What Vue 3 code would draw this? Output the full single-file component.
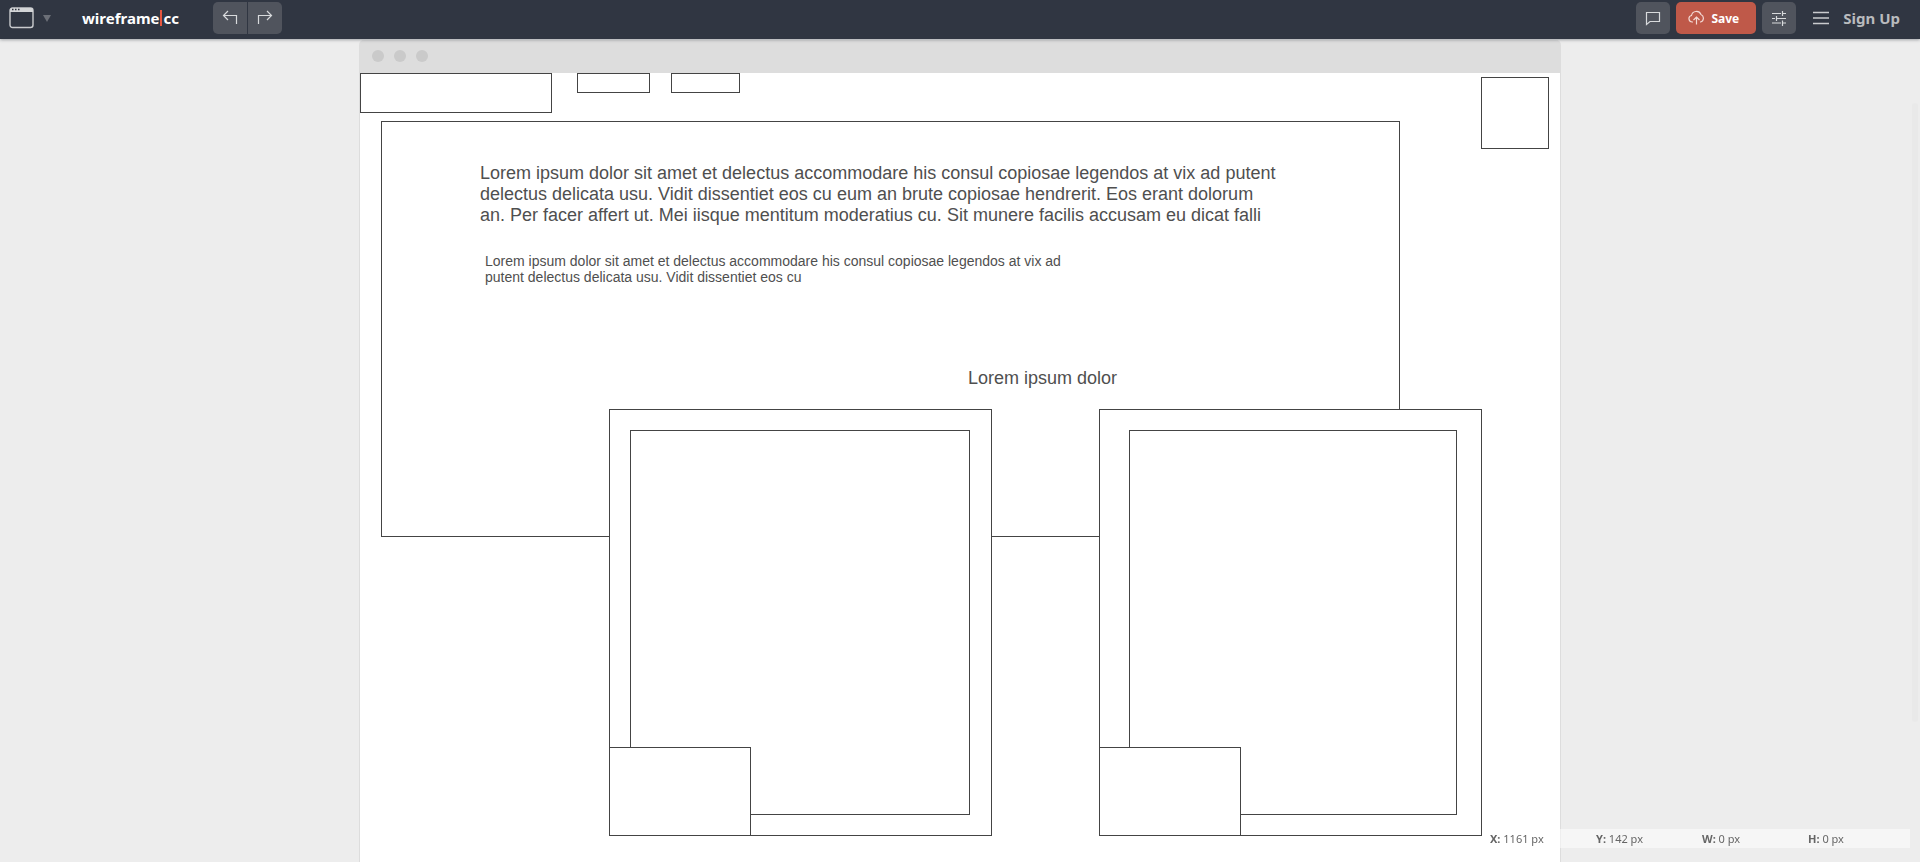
<script setup>
const shapes = [
  { id: 'logo', x: 0, y: 0, w: 192, h: 40 },
  { id: 'nav-1', x: 217, y: 0, w: 73, h: 20 },
  { id: 'nav-2', x: 311, y: 0, w: 69, h: 20 },
  { id: 'avatar', x: 1121, y: 4, w: 68, h: 72 },
  { id: 'hero', x: 21, y: 48, w: 1019, h: 416 },
  { id: 'card-1', x: 249, y: 336, w: 383, h: 427 },
  { id: 'card-1-image', x: 270, y: 357, w: 340, h: 385 },
  { id: 'card-1-label', x: 249, y: 674, w: 142, h: 89 },
  { id: 'card-2', x: 739, y: 336, w: 383, h: 427 },
  { id: 'card-2-image', x: 769, y: 357, w: 328, h: 385 },
  { id: 'card-2-label', x: 739, y: 674, w: 142, h: 89 },
]

const texts = [
  {
    id: 'headline',
    x: 120,
    y: 90,
    size: 'large',
    lines: [
      'Lorem ipsum dolor sit amet et delectus accommodare his consul copiosae legendos at vix ad putent',
      'delectus delicata usu. Vidit dissentiet eos cu eum an brute copiosae hendrerit. Eos erant dolorum',
      'an. Per facer affert ut. Mei iisque mentitum moderatius cu. Sit munere facilis accusam eu dicat falli',
    ],
  },
  {
    id: 'subhead',
    x: 125,
    y: 180,
    size: 'small',
    lines: [
      'Lorem ipsum dolor sit amet et delectus accommodare his consul copiosae legendos at vix ad',
      'putent delectus delicata usu. Vidit dissentiet eos cu',
    ],
  },
  { id: 'caption', x: 608, y: 295, size: 'large', lines: ['Lorem ipsum dolor'] },
]

const readout = [
  { label: 'X:', value: '1161 px' },
  { label: 'Y:', value: '142 px' },
  { label: 'W:', value: '0 px' },
  { label: 'H:', value: '0 px' },
]

const place = (s) => ({ left: s.x + 'px', top: s.y + 'px', width: s.w + 'px', height: s.h + 'px' })
</script>

<template>
  <div class="app">
    <header class="topbar">
      <div class="side">
        <button class="plain device" aria-label="Canvas type">
          <svg width="25" height="22" viewBox="0 0 25 22">
            <rect x="1" y="1" width="23" height="19.5" rx="2.5" fill="none" stroke="#c9cbce" stroke-width="1.4" />
            <path d="M1 5V3.5Q1 1 3.500 1h18Q24 1 24 3.500V5z" fill="#d3d5d7" />
            <path d="M3 2.500h1.500M6 2.500h1.500M9 2.500h1.500" stroke="#303540" stroke-width="1.500" />
          </svg>
          <svg width="8" height="7" viewBox="0 0 8 7"><path d="M0 0h8L4 7z" fill="#6b6f77" /></svg>
        </button>
        <a class="brand" href="#">wireframe<i class="bar"></i>cc</a>
        <div class="history">
          <button class="tool" aria-label="Undo">
            <svg width="16" height="16" viewBox="0 0 16 16"><path d="M6 1L1.500 5.500L6 10M1.500 5.500H14.500V14" /></svg>
          </button>
          <button class="tool" aria-label="Redo">
            <svg width="16" height="16" viewBox="0 0 16 16"><path d="M10 1L14.500 5.500L10 10M14.500 5.500H1.500V14" /></svg>
          </button>
        </div>
      </div>
      <div class="side actions">
        <button class="tool" aria-label="Comments">
          <svg width="16" height="16" viewBox="0 0 16 16"><path d="M1.500 2.500h13v9H5l-3.500 3z" /></svg>
        </button>
        <button class="save">
          <svg width="17" height="16" viewBox="0 0 17 16">
            <path d="M5 12H4.500A3.300 3.300 0 0 1 3.500 5.500A5 5 0 0 1 13 4.500A4 4 0 0 1 12.500 12H12M8.500 14.500V7M5.500 10L8.500 7L11.500 10" />
          </svg>
          <span>Save</span>
        </button>
        <button class="tool" aria-label="Settings">
          <svg width="16" height="16" viewBox="0 0 16 16">
            <path d="M1 3.500h9M12 3.500h3M11.500 1v5M1 8.500h3M6 8.500h9M5.500 6v5M1 13h9M12 13h3M11.500 10.500V16" />
          </svg>
        </button>
        <button class="plain menu" aria-label="Menu">
          <svg width="16" height="14" viewBox="0 0 16 14">
            <path d="M0 1.500h16M0 7h16M0 12.500h16" fill="none" stroke="#c9cbce" stroke-width="1.500" />
          </svg>
        </button>
        <a class="signup" href="#">Sign Up</a>
      </div>
    </header>

    <main class="workspace">
      <section class="browser">
        <div class="chrome"><i class="dot"></i><i class="dot"></i><i class="dot"></i></div>
        <div class="canvas">
          <div v-for="s in shapes" :key="s.id" class="shape" :style="place(s)"></div>
          <p
            v-for="t in texts"
            :key="t.id"
            class="note"
            :class="t.size"
            :style="{ left: t.x + 'px', top: t.y + 'px' }"
          >
            <span v-for="line in t.lines" :key="line" class="line">{{ line }}</span>
          </p>
        </div>
      </section>
    </main>

    <div class="thumb"></div>
    <footer class="status">
      <span v-for="r in readout" :key="r.label" class="cell"><b>{{ r.label }}</b> {{ r.value }}</span>
    </footer>
  </div>
</template>

<style>
body {
  margin: 0;
  background: #ededed;
}
</style>

<style scoped>
.app {
  display: flex;
  flex-direction: column;
  min-height: 100vh;
  font-family: 'Noto Sans', 'Open Sans', sans-serif;
}

.topbar {
  position: relative;
  z-index: 2;
  display: flex;
  justify-content: space-between;
  box-sizing: border-box;
  height: 39px;
  padding: 2px 20px 5px 9px;
  background: #303642;
  box-shadow: 0 1px 3px rgba(48, 54, 66, 0.4);
}

.side {
  display: flex;
  align-items: center;
}

.actions {
  gap: 6px;
}

button {
  margin: 0;
  padding: 0;
  border: 0;
  font: inherit;
  cursor: pointer;
}

a {
  text-decoration: none;
}

.plain {
  display: flex;
  align-items: center;
  background: none;
}

.device {
  gap: 9px;
}

.brand {
  display: flex;
  align-items: center;
  margin-left: 31px;
  font-size: 15px;
  font-weight: 700;
  line-height: 20px;
  color: #fff;
}

.bar {
  width: 2px;
  height: 16px;
  margin: 0 1px;
  background: #e8563f;
}

.history {
  display: flex;
  gap: 1px;
  margin-left: 34px;
}

.tool {
  display: flex;
  align-items: center;
  justify-content: center;
  width: 34px;
  height: 32px;
  border-radius: 5px;
  background: #50545d;
}

.tool svg,
.save svg {
  fill: none;
  stroke: #d8dadc;
  stroke-width: 1.2;
}

.history .tool:first-child {
  border-radius: 5px 0 0 5px;
}

.history .tool:last-child {
  border-radius: 0 5px 5px 0;
}

.save {
  display: flex;
  align-items: center;
  gap: 6px;
  height: 32px;
  padding: 0 17px 0 12px;
  border-radius: 5px;
  background: #bf5949;
  font-size: 12px;
  font-weight: 700;
  color: #fff;
}

.save svg {
  stroke: #f3d9d5;
}

.menu {
  margin-left: 11px;
}

.signup {
  margin-left: 8px;
  font-size: 15px;
  font-weight: 700;
  line-height: 20px;
  color: #b9bbbe;
}

.workspace {
  display: flex;
  flex: 1;
  justify-content: center;
  padding-top: 1px;
}

.browser {
  display: flex;
  flex-direction: column;
  width: 100%;
  max-width: 1202px;
}

.chrome {
  display: flex;
  align-items: center;
  gap: 10px;
  box-sizing: border-box;
  height: 33px;
  padding: 0 13px 1px;
  border-radius: 5px 5px 0 0;
  background: #ddd;
}

.dot {
  width: 12px;
  height: 12px;
  border-radius: 50%;
  background: #cacaca;
}

.canvas {
  position: relative;
  flex: 1;
  min-height: 780px;
  border: solid #ddd;
  border-width: 0 1px;
  background: #fff;
}

.shape {
  position: absolute;
  box-sizing: border-box;
  border: 1px solid #444;
  background: #fff;
}

.note {
  position: absolute;
  margin: 0;
  font-family: 'Liberation Sans', Arial, sans-serif;
  color: #4f4f4f;
  white-space: nowrap;
}

.line {
  display: block;
}

.large {
  font-size: 18px;
  line-height: 21px;
}

.small {
  font-size: 14px;
  line-height: 16px;
}

.status {
  position: fixed;
  right: 10px;
  bottom: 14px;
  display: flex;
  background: rgba(255, 255, 255, 0.5);
}

.cell {
  box-sizing: border-box;
  width: 106px;
  padding-left: 4px;
  font-size: 11px;
  line-height: 19px;
  color: #666;
}

.thumb {
  position: fixed;
  top: 103px;
  right: 2px;
  bottom: 140px;
  width: 6px;
  border-radius: 3px;
  background: #e9e9e9;
}
</style>
